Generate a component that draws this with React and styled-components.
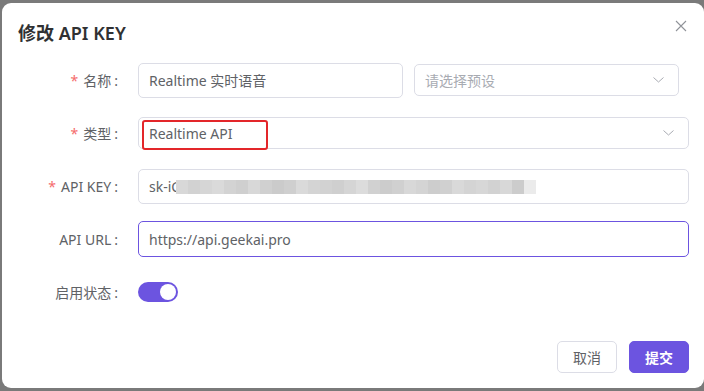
import React from "react";
import styled, { createGlobalStyle } from "styled-components";

const Global = createGlobalStyle`
  html, body { margin: 0; padding: 0; }
  body {
    width: 704px; height: 391px; overflow: hidden;
    background: #7a7a7a;
    font-family: "Noto Sans", "Noto Sans CJK SC", sans-serif;
  }
`;

const PURPLE = "#6c54e0";

const Backdrop = styled.div`
  width: 704px;
  height: 391px;
  padding: 3px 0 3px 2px;
  box-sizing: border-box;
`;

const Dialog = styled.div`
  width: 702px;
  height: 385px;
  background: #fff;
  border-radius: 9px;
  display: flex;
  flex-direction: column;
  box-sizing: border-box;
  padding: 18px 15px 15px 16px;
`;

const Header = styled.div`
  display: flex;
  justify-content: space-between;
  align-items: flex-start;
`;

const Title = styled.h2`
  margin: 0;
  font-size: 18px;
  line-height: 24px;
  font-weight: 600;
  color: #303133;
`;

const Close = styled.button`
  border: 0;
  background: none;
  padding: 0;
  margin: -1px 2px 0 0;
  width: 12px;
  height: 12px;
  display: flex;
  cursor: pointer;
`;

const Form = styled.div`
  display: flex;
  flex-direction: column;
  gap: 17px;
  margin-top: 17px;
`;

const Row = styled.div`
  display: flex;
  align-items: center;
  height: 36px;
`;

const Label = styled.label`
  width: 120px;
  flex: none;
  box-sizing: border-box;
  padding-right: 20px;
  text-align: right;
  font-size: 14px;
  color: #606266;
  white-space: nowrap;
`;

const Star = styled.span`
  color: #f56c6c;
  margin-right: 5px;
`;

const Colon = styled.span`
  margin-left: 3px;
`;

const Field = styled.div`
  flex: 1;
  min-width: 0;
  display: ${(p) => (p.$grid ? "grid" : "block")};
  grid-template-columns: 265px 265px;
  column-gap: 11px;
  align-items: center;
`;

const InputBox = styled.div`
  position: relative;
  height: ${(p) => p.$h || 35}px;
  box-sizing: border-box;
  border: 1px solid ${(p) => (p.$focus ? PURPLE : "#dcdde6")};
  border-radius: 5px;
  display: flex;
  align-items: center;
  padding: 0 14px 0 10px;
  font-size: 14px;
  color: ${(p) => (p.$placeholder ? "#a8abb2" : "#606266")};
  background: #fff;
`;

const Value = styled.span`
  flex: 1;
  white-space: nowrap;
`;

const Highlight = styled.div`
  position: absolute;
  left: 3px;
  top: 2px;
  width: 126px;
  height: 30px;
  box-sizing: border-box;
  border: 2px solid #e3262a;
  border-radius: 3px;
  pointer-events: none;
`;

const Mosaic = styled.div`
  display: flex;
  height: 14px;
  margin-left: -4px;
  margin-top: 1px;
`;

const Tile = styled.div`
  width: 12px;
  height: 14px;
  flex: none;
`;

const Switch = styled.div`
  width: 40px;
  height: 20px;
  border-radius: 10px;
  background: ${PURPLE};
  display: flex;
  align-items: center;
  justify-content: flex-end;
  padding: 0 2px;
  box-sizing: border-box;
`;

const Knob = styled.div`
  width: 16px;
  height: 16px;
  border-radius: 50%;
  background: #fff;
`;

const Footer = styled.div`
  margin-top: auto;
  display: flex;
  justify-content: flex-end;
  gap: 12px;
`;

const Button = styled.button`
  width: 60px;
  height: 32px;
  border-radius: 5px;
  font-family: inherit;
  font-size: 14px;
  border: 1px solid ${(p) => (p.$primary ? PURPLE : "#dcdde6")};
  background: ${(p) => (p.$primary ? PURPLE : "#fff")};
  color: ${(p) => (p.$primary ? "#fff" : "#606266")};
  font-weight: ${(p) => (p.$primary ? 600 : 400)};
  padding: 0;
`;

const Chevron = () => (
  <svg width="11" height="6" viewBox="0 0 11 6" fill="none">
    <path d="M0.5 0.5 L5.5 5 L10.5 0.5" stroke="#a8abb2" strokeWidth="1" />
  </svg>
);

const tiles = [
  "#d8d8d8", "#d2d2d2", "#d6d6d6", "#dadada", "#d3d3d3", "#cfcfcf", "#d8d8d8",
  "#d0d0d0", "#cbcbcb", "#cfcfcf", "#dadada", "#d4d4d4", "#d2d2d2", "#cfcfcf",
  "#d5d5d5", "#dcdcdc", "#d1d1d1", "#cccccc", "#d0d0d0", "#d8d8d8", "#d4d4d4",
  "#cdcdcd", "#d0d0d0", "#d9d9d9", "#d4d4d4", "#d7d7d7", "#d2d2d2", "#d8d8d8",
  "#cccccc", "#ebebeb",
];

export default function App() {
  return (
    <>
      <Global />
      <Backdrop>
        <Dialog>
          <Header>
            <Title>修改 API KEY</Title>
            <Close aria-label="close">
              <svg width="12" height="12" viewBox="0 0 12 12">
                <path d="M1 1 L11 11 M11 1 L1 11" stroke="#909399" strokeWidth="1.1" />
              </svg>
            </Close>
          </Header>
          <Form>
            <Row>
              <Label><Star>*</Star>名称<Colon>:</Colon></Label>
              <Field $grid>
                <InputBox><Value>Realtime 实时语音</Value></InputBox>
                <InputBox $h={32} $placeholder>
                  <Value>请选择预设</Value>
                  <Chevron />
                </InputBox>
              </Field>
            </Row>
            <Row>
              <Label><Star>*</Star>类型<Colon>:</Colon></Label>
              <Field>
                <InputBox $h={32}>
                  <Value>Realtime API</Value>
                  <Chevron />
                  <Highlight />
                </InputBox>
              </Field>
            </Row>
            <Row>
              <Label><Star>*</Star>API KEY<Colon>:</Colon></Label>
              <Field>
                <InputBox>
                  <span>sk-iC</span>
                  <Mosaic>
                    {tiles.map((c, i) => (
                      <Tile key={i} style={{ background: c }} />
                    ))}
                  </Mosaic>
                </InputBox>
              </Field>
            </Row>
            <Row>
              <Label>API URL<Colon>:</Colon></Label>
              <Field>
                <InputBox $h={36} $focus>
                  <Value>https://api.geekai.pro</Value>
                </InputBox>
              </Field>
            </Row>
            <Row>
              <Label>启用状态<Colon>:</Colon></Label>
              <Field>
                <Switch><Knob /></Switch>
              </Field>
            </Row>
          </Form>
          <Footer>
            <Button>取消</Button>
            <Button $primary>提交</Button>
          </Footer>
        </Dialog>
      </Backdrop>
    </>
  );
}
